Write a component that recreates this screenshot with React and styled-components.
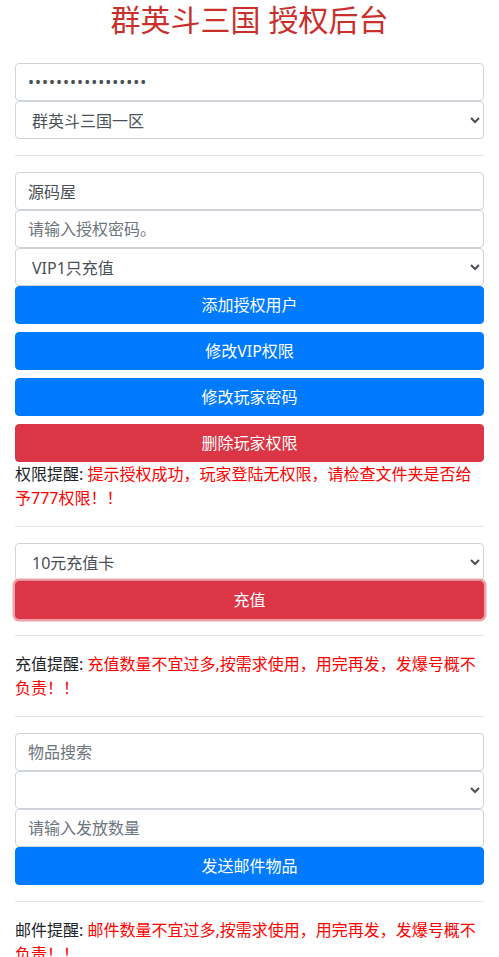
import React from 'react';
import styled, { createGlobalStyle, css } from 'styled-components';

const GlobalStyle = createGlobalStyle`
  * { box-sizing: border-box; }
  body {
    margin: 0;
    background: #fff;
    color: #212529;
    font-family: "Noto Sans", "Noto Sans CJK SC", sans-serif;
    font-size: 16px;
    line-height: 1.5;
  }
`;

const Page = styled.div`
  padding: 0 15px;
`;

const Title = styled.h2`
  margin: 2px 0 25px;
  font-size: 30px;
  font-weight: 400;
  line-height: 36px;
  text-align: center;
  color: #c9302c;
`;

const Rule = styled.hr`
  margin: 16px 0;
  border: 0;
  border-top: 1px solid rgba(0, 0, 0, 0.1);
`;

const field = css`
  display: block;
  width: 100%;
  height: 38px;
  margin: 0;
  padding: 6px 12px;
  font-family: inherit;
  font-size: 16px;
  line-height: 1.5;
  color: #495057;
  background: #fff;
  border: 1px solid #ced4da;
  border-radius: 4px;
  outline: none;
`;

const Input = styled.input`
  ${field}
  &[type='password'] { letter-spacing: 1px; }
  &::placeholder { color: #6c757d; }
`;

const Select = styled.select`
  ${field}
  padding: 7px 8px 5px 12px;
`;

const Button = styled.button`
  display: block;
  width: 100%;
  height: 38px;
  margin: ${(p) => (p.$spaced ? '8px 0 0' : '0')};
  padding: 6px 12px;
  font-family: inherit;
  font-size: 16px;
  line-height: 1.5;
  color: #fff;
  background: ${(p) => (p.$danger ? '#dc3545' : '#007bff')};
  border: 1px solid ${(p) => (p.$danger ? '#dc3545' : '#007bff')};
  border-radius: 4px;
  cursor: pointer;
  ${(p) => p.$focused && css`box-shadow: 0 0 0 2.5px rgba(225, 83, 97, 0.55);`}
`;

const Note = styled.p`
  margin: 0;
  font-size: 16px;
  line-height: 24px;
  color: #212529;
`;

const Warn = styled.span`
  color: #f00;
`;

export default function App() {
  return (
    <Page>
      <GlobalStyle />
      <Title>群英斗三国 授权后台</Title>

      <Input type="password" defaultValue="12345678901234567" />
      <Select defaultValue="1">
        <option value="1">群英斗三国一区</option>
      </Select>

      <Rule />

      <Input defaultValue="源码屋" />
      <Input placeholder="请输入授权密码。" />
      <Select defaultValue="vip1">
        <option value="vip1">VIP1只充值</option>
      </Select>
      <Button>添加授权用户</Button>
      <Button $spaced>修改VIP权限</Button>
      <Button $spaced>修改玩家密码</Button>
      <Button $spaced $danger>删除玩家权限</Button>
      <Note>
        权限提醒: <Warn>提示授权成功，玩家登陆无权限，请检查文件夹是否给予777权限！！</Warn>
      </Note>

      <Rule />

      <Select defaultValue="10">
        <option value="10">10元充值卡</option>
      </Select>
      <Button $danger $focused>充值</Button>

      <Rule />

      <Note>
        充值提醒: <Warn>充值数量不宜过多,按需求使用，用完再发，发爆号概不负责！！</Warn>
      </Note>

      <Rule />

      <Input placeholder="物品搜索" />
      <Select defaultValue="">
        <option value=""></option>
      </Select>
      <Input placeholder="请输入发放数量" />
      <Button>发送邮件物品</Button>

      <Rule />

      <Note>
        邮件提醒: <Warn>邮件数量不宜过多,按需求使用，用完再发，发爆号概不负责！！</Warn>
      </Note>
    </Page>
  );
}
